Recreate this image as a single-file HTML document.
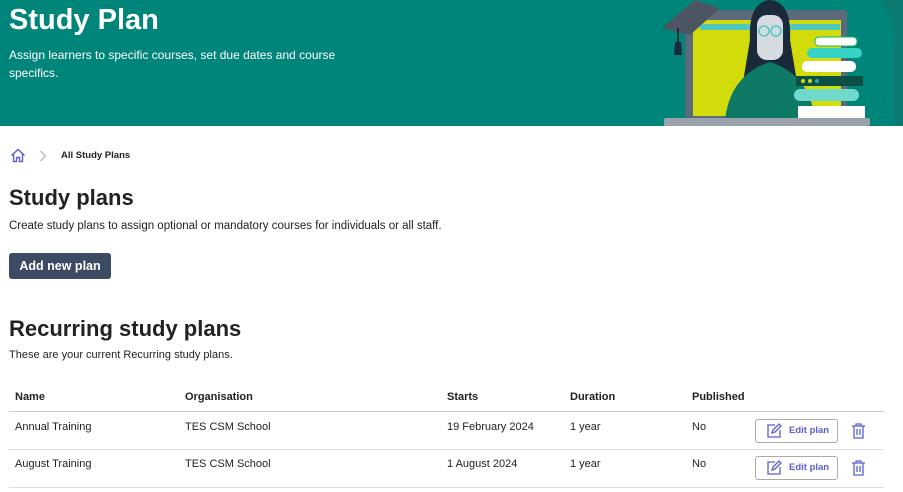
<!DOCTYPE html>
<html><head><style>
*{margin:0;padding:0;box-sizing:border-box}
body{width:903px;height:492px;overflow:hidden;font-family:"Liberation Sans",sans-serif;color:#222;background:#fff;position:relative}
.banner{position:absolute;left:0;top:0;width:903px;height:126px;background:#00857a;overflow:hidden}
.banner h1{position:absolute;left:9px;top:4px;font-size:29px;color:#fff;font-weight:bold}
.banner p{position:absolute;left:9px;top:46px;width:330px;font-size:12px;line-height:18px;color:#fff}
.a{position:absolute}
.t{position:absolute;font-size:11px}
.btn{position:absolute;left:755px;width:83px;height:24px;border:1px solid #aaa;border-radius:3px;font-size:9.5px;color:#5a5fd0;font-weight:bold;padding:5px 0 0 33px}
</style></head><body>
<div class="banner">
<h1>Study Plan</h1>
<p>Assign learners to specific courses, set due dates and course specifics.</p>
<svg class="a" style="left:640px;top:0" width="263" height="126">
<path d="M236 0 Q254 8 254 45 V126 H263 V0Z" fill="#0b7a70"/>
<rect x="45" y="10" width="162" height="108" rx="3" fill="#5a6a7a"/>
<rect x="53" y="20" width="148" height="96" fill="#d1dc0a"/>
<rect x="60" y="24" width="140" height="6" fill="#4ec9c0"/>
<path d="M110 40 Q108 2 130 0 Q152 2 150 40 L160 100 L100 100 Z" fill="#1b2a3a"/>
<rect x="117" y="15" width="26" height="45" rx="10" fill="#d6dbe2"/>
<path d="M85 120 Q90 75 130 62 Q170 75 175 120Z" fill="#0e7a66"/>
<circle cx="124" cy="31" r="5" fill="none" stroke="#4ec9c0" stroke-width="1.5"/>
<circle cx="136" cy="31" r="5" fill="none" stroke="#4ec9c0" stroke-width="1.5"/>
<path d="M22 28 L55 0 L80 8 L50 35Z" fill="#4d5562"/>
<rect x="37" y="28" width="2" height="15" fill="#1b2a3a"/><path d="M35 42 L41 42 L42 55 L34 55Z" fill="#1b2a3a"/>
<rect x="175" y="37" width="42" height="9" rx="4" fill="#fff" stroke="#1b6"/>
<rect x="167" y="48" width="55" height="10" rx="5" fill="#34d3c3"/>
<rect x="162" y="61" width="54" height="11" rx="5" fill="#fff"/>
<rect x="156" y="76" width="67" height="10" fill="#0b4e44"/>
<circle cx="163" cy="81" r="2" fill="#d1dc0a"/><circle cx="170" cy="81" r="2" fill="#d1dc0a"/><circle cx="177" cy="81" r="2" fill="#2ab"/>
<rect x="154" y="89" width="65" height="12" rx="6" fill="#6fd9cc"/>
<rect x="158" y="106" width="67" height="12" fill="#fff"/>
<rect x="24" y="118" width="206" height="8" rx="2" fill="#9aa3ad"/>
</svg>
</div>
<svg class="a" style="left:10px;top:148px" width="16" height="15" viewBox="0 0 16 15"><path d="M1.5 7.5 L8 1.5 L14.5 7.5 M3.5 6 V13.5 H6.5 V9.5 H9.5 V13.5 H12.5 V6" fill="none" stroke="#5a5fd0" stroke-width="1.4"/></svg>
<svg class="a" style="left:39px;top:150px" width="8" height="12"><path d="M1.5 1 L6.5 6 L1.5 11" fill="none" stroke="#bbb" stroke-width="1.4"/></svg>
<div class="t" style="left:61px;top:150px;font-size:9.5px;font-weight:bold">All Study Plans</div>
<div class="a" style="left:9px;top:185px;font-size:22px;font-weight:bold">Study plans</div>
<div class="t" style="left:9px;top:220px;font-size:11.5px">Create study plans to assign optional or mandatory courses for individuals or all staff.</div>
<div class="a" style="left:9px;top:253px;width:102px;height:26px;background:#3d4a63;border-radius:3px;color:#fff;font-size:12.5px;font-weight:bold;text-align:center;line-height:26px">Add new plan</div>
<div class="a" style="left:9px;top:316px;font-size:22px;font-weight:bold">Recurring study plans</div>
<div class="t" style="left:9px;top:349px;font-size:11px">These are your current Recurring study plans.</div>
<div class="t" style="left:15px;top:391px;font-weight:bold">Name</div>
<div class="t" style="left:185px;top:391px;font-weight:bold">Organisation</div>
<div class="t" style="left:447px;top:391px;font-weight:bold">Starts</div>
<div class="t" style="left:570px;top:391px;font-weight:bold">Duration</div>
<div class="t" style="left:692px;top:391px;font-weight:bold">Published</div>
<div class="a" style="left:9px;top:411px;width:875px;height:1px;background:#ccc"></div>
<div class="a" style="left:9px;top:449px;width:875px;height:1px;background:#ddd"></div>
<div class="a" style="left:9px;top:487px;width:875px;height:1px;background:#ddd"></div>
<div class="t" style="left:15px;top:421px">Annual Training</div>
<div class="t" style="left:185px;top:421px">TES CSM School</div>
<div class="t" style="left:447px;top:421px">19 February 2024</div>
<div class="t" style="left:570px;top:421px">1 year</div>
<div class="t" style="left:692px;top:421px">No</div>
<div class="t" style="left:15px;top:458px">August Training</div>
<div class="t" style="left:185px;top:458px">TES CSM School</div>
<div class="t" style="left:447px;top:458px">1 August 2024</div>
<div class="t" style="left:570px;top:458px">1 year</div>
<div class="t" style="left:692px;top:458px">No</div>
<div class="btn" style="top:419px">Edit plan</div>
<div class="btn" style="top:456px">Edit plan</div>
<svg class="a" style="left:766px;top:423px" width="17" height="16"><path d="M9 2 H2 V14 H14 V7 M6 10 L7 7 L13 1 L15 3 L9 9 Z" fill="none" stroke="#5a5fd0" stroke-width="1.3"/></svg>
<svg class="a" style="left:766px;top:460px" width="17" height="16"><path d="M9 2 H2 V14 H14 V7 M6 10 L7 7 L13 1 L15 3 L9 9 Z" fill="none" stroke="#5a5fd0" stroke-width="1.3"/></svg>
<svg class="a" style="left:851px;top:423px" width="15" height="16"><path d="M1 3 H14 M5 3 V1 H10 V3 M3 3 V15 H12 V3 M6 6 V12 M9 6 V12" fill="none" stroke="#5a5fd0" stroke-width="1.3"/></svg>
<svg class="a" style="left:851px;top:460px" width="15" height="16"><path d="M1 3 H14 M5 3 V1 H10 V3 M3 3 V15 H12 V3 M6 6 V12 M9 6 V12" fill="none" stroke="#5a5fd0" stroke-width="1.3"/></svg>
</body></html>
